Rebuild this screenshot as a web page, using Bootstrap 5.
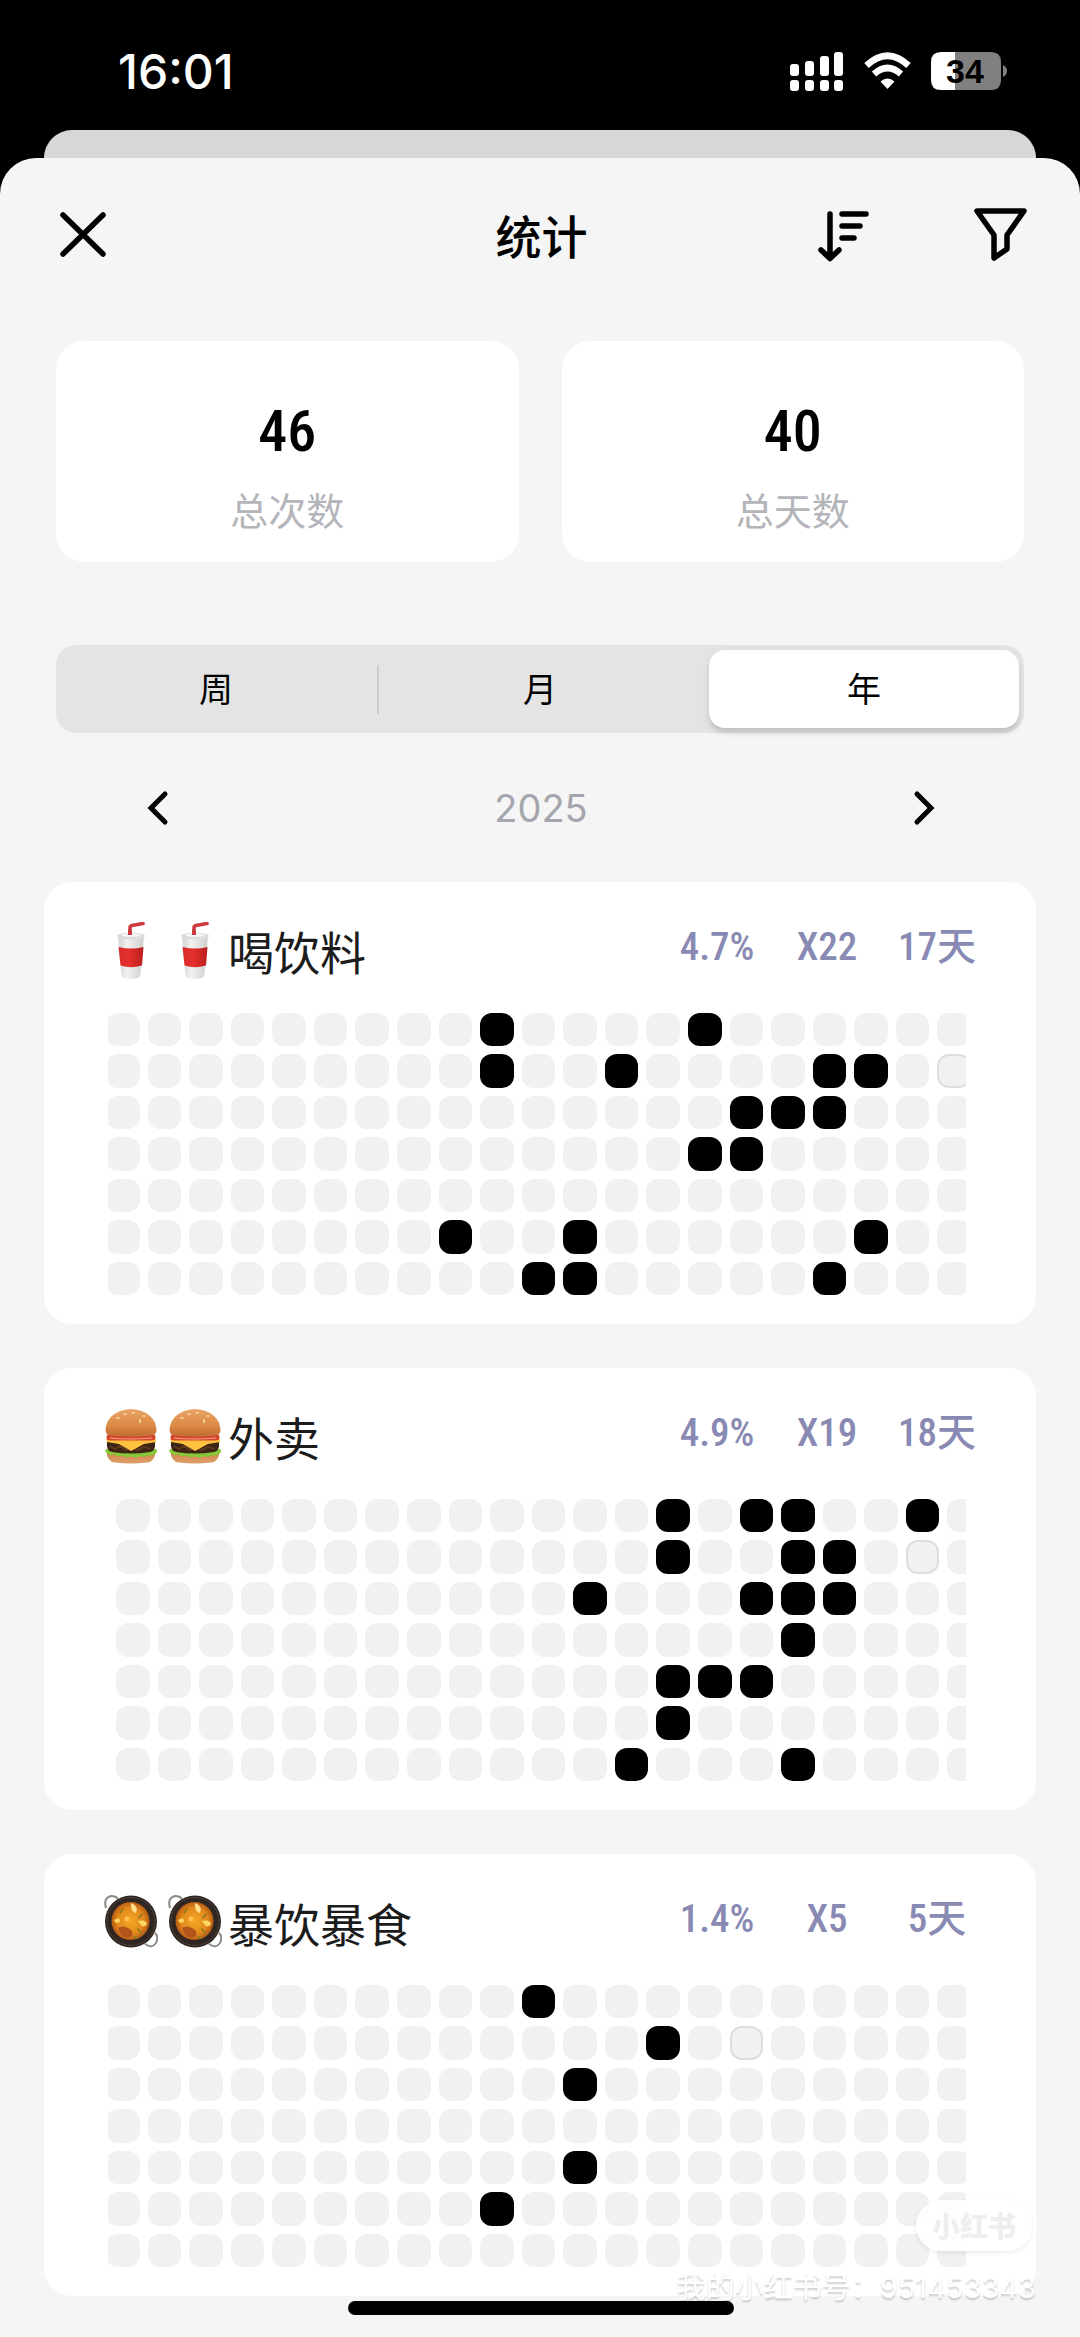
<!DOCTYPE html>
<html lang="zh-CN">
<head>
<meta charset="utf-8">
<meta name="viewport" content="width=device-width, initial-scale=1">
<title>统计</title>
<link href="https://cdn.jsdelivr.net/npm/bootstrap@5.3.0/dist/css/bootstrap.min.css" rel="stylesheet">
<style>
  body { background: #000; color: #000; font-family: Inter, "Noto Sans CJK SC", sans-serif; }
  .status-bar { height: 130px; padding: 33px 70px 0 118px; }
  .status-time { font-size: 48px; line-height: 78px; font-weight: 500; }
  .battery-level { font-weight: 700; font-size: 34px; font-family: "Liberation Sans", sans-serif; }
  .sheet-behind { height: 28px; margin: 0 44px; background: #d7d7d7; border-radius: 28px 28px 0 0; }
  .sheet { background: #f5f5f5; border-radius: 36px 36px 0 0; padding: 0 44px 41px; }
  .sheet-head { height: 183px; display: grid; grid-template-columns: 1fr auto 1fr; padding: 48px 5px 0 8px; align-items: start; }
  .sheet-title { font-size: 46px; line-height: 62px; font-weight: 500; margin: 0; }
  .icon-btn { background: none; border: 0; padding: 0; line-height: 0; color: #000; }
  .stroke-icon { fill: none; stroke: currentColor; stroke-linecap: round; stroke-linejoin: round; }
  .chevron { stroke-linejoin: miter; }
  .head-tools { gap: 98px; }
  .inset { padding: 0 12px; }
  .totals { gap: 43px; }
  .total-box { background: #fff; border-radius: 28px; height: 221px; padding-top: 54px; }
  .total-num { font: 500 58px/72px "Roboto Condensed", Roboto, sans-serif; }
  .total-label { font-size: 38px; line-height: 56px; margin-top: 16px; color: #b4b5ba; font-weight: 400; }
  .segments { margin-top: 83px; height: 88px; background: #e4e4e4; border-radius: 20px; padding: 5px; gap: 6px; }
  .segments label { flex: 1 1 0; font-size: 34px; line-height: 80px; height: 78px; font-weight: 400; border-radius: 16px; text-align: center; margin: 0; }
  .segments .btn-check:checked + label { background: #fff; box-shadow: 0 5px 4px rgba(0,0,0,.1), 0 4px 12px rgba(0,0,0,.05); }
  .seg-line { width: 2px; height: 49px; background: #cdcdcd; }
  .year-row { height: 149px; padding: 0 90px 0 92px; }
  .year-text { font-size: 38px; line-height: 48px; color: #a4a5ad; }
  .habit { background: #fff; border-radius: 28px; height: 442px; padding: 29px 44px 29px 60px; }
  .habit + .habit { margin-top: 44px; }
  .habit-top { height: 102px; }
  .habit-name { font-size: 46px; line-height: 84px; font-weight: 400; color: #1c1c1c; margin: 0 0 0 6px; }
  .emoji-pair { gap: 10px; padding-top: 11px; }
  .emoji-pair svg { width: 54px; height: 58px; }
  .habit-nums { font: 500 39px/72px "Roboto Condensed", Roboto, "Noto Sans CJK SC", sans-serif; color: #898ab3; }
  .habit-nums span { width: 110px; text-align: center; white-space: nowrap; }
  .heat { overflow: hidden; margin: 0 26px 0 4px; }
  .heat-grid { display: grid; grid-auto-flow: column; grid-template-rows: repeat(7, 1fr); grid-template-columns: repeat(21, 1fr); gap: 8px; height: 282px; width: calc(100% + 7px); margin-left: -2px; }
  .heat-grid.shifted { margin-left: 8px; }
  .heat-grid i { background: #f1f1f1; border-radius: 12px; }
  .heat-grid i.on { background: #000; }
  .heat-grid i.today { border: 2px solid #dedede; }
  .home-bar { position: fixed; left: 50%; bottom: 22px; width: 386px; height: 14px; margin-left: -192px; border-radius: 7px; background: #000; }
  .stamp { position: absolute; right: 44px; bottom: 32px; text-align: right; pointer-events: none; }
  .stamp-pill { display: inline-block; margin-right: 4px; padding: 0 16px; height: 51px; border-radius: 26px; background: rgba(255,255,255,.88); box-shadow: 0 2px 5px rgba(0,0,0,.07); font: 900 28px/50px "Noto Sans CJK SC", sans-serif; color: #eee; }
  .stamp-id { font-size: 29px; line-height: 34px; margin-top: 20px; color: #fff; text-shadow: 0 2px 2px rgba(0,0,0,.2); font-family: Inter, "Noto Sans CJK SC", sans-serif; }
</style>
<script src="https://cdn.jsdelivr.net/npm/bootstrap@5.3.0/dist/js/bootstrap.bundle.min.js"></script>
</head>
<body>
<svg width="0" height="0" class="position-absolute" aria-hidden="true">
  <defs>
    <linearGradient id="cupG"><stop offset="0" stop-color="#d2d2d2"/><stop offset=".35" stop-color="#f2f2f2"/><stop offset="1" stop-color="#cfcfcf"/></linearGradient>
    <linearGradient id="redG"><stop offset="0" stop-color="#d52a2a"/><stop offset=".4" stop-color="#e5302c"/><stop offset="1" stop-color="#b9201f"/></linearGradient>
    <linearGradient id="bunG" x2="0" y2="1"><stop offset="0" stop-color="#e9a465"/><stop offset=".6" stop-color="#dc8a47"/><stop offset="1" stop-color="#bf6a31"/></linearGradient>
    <linearGradient id="bunB" x2="0" y2="1"><stop offset="0" stop-color="#cf8147"/><stop offset="1" stop-color="#dfa06a"/></linearGradient>
    <radialGradient id="soupG"><stop offset="0" stop-color="#f5a623"/><stop offset=".7" stop-color="#e08a1c"/><stop offset="1" stop-color="#b85c14"/></radialGradient>
    <symbol id="cup" viewBox="0 0 54 58">
      <path d="M26 14V6q0-2 2-2.400L39 1.500" fill="none" stroke="#cf3a40" stroke-width="3.600" stroke-linecap="round"/>
      <path d="M14 14L17.500 53Q18 57 27 57T36.500 53L40 14Z" fill="url(#cupG)"/>
      <ellipse cx="27" cy="14" rx="14" ry="3.500" fill="#dcdcdc"/>
      <path d="M17 12.500Q27 9.500 37 12.500L36 14Q27 16 18 14Z" fill="#f6f6f6"/>
      <path d="M24 13h4v-5h-4Z" fill="#cf3a40"/>
      <path d="M14.500 25Q27 28 39.500 25L38 43.500Q27 47 16.500 43.500Z" fill="url(#redG)"/>
    </symbol>
    <symbol id="burger" viewBox="0 0 54 58">
      <path d="M2.500 43Q3 54 11 54.500Q27 56.500 43 54.500Q51 54 51.500 43Z" fill="url(#bunB)"/>
      <path d="M2 41q-2 4 2 4 2 4 6 1 4 4 8 1 5 4 9 1 5 3 9 0 5 2 8-1 4 2 6-1 5-1 2-5Z" fill="#84c93a"/>
      <path d="M3 34q-1 9 5 10 19 3 38 0 6-1 5-10Z" fill="#3c2415"/>
      <path d="M6 38l5 3 5-3 6 4 5-2 7 2 6-3 7 2" stroke="#5e3a20" stroke-width="2" fill="none"/>
      <path d="M2 31h50v3L40 36 27 43 15 36 3 34Z" fill="#ffc23d"/>
      <path d="M3 27h48q2 5-3 5.500H6Q1 32 3 27Z" fill="#d6452b"/>
      <path d="M6 30q20 2 42 0" stroke="#f5a08a" stroke-width="1.200" fill="none"/>
      <path d="M1.500 22Q3 3 27 1Q51 3 52.500 22Q52.500 27 47 27.500Q27 30 7 27.500Q1.500 27 1.500 22Z" fill="url(#bunG)"/>
      <g fill="#f7cf9a"><ellipse cx="21" cy="6" rx="2" ry="1"/><ellipse cx="29" cy="5" rx="2" ry="1"/><ellipse cx="36" cy="13" rx="1.200" ry="2"/><ellipse cx="14" cy="10" rx="2" ry="1"/><ellipse cx="40" cy="8" rx="1.600" ry="1"/></g>
    </symbol>
    <symbol id="pan" viewBox="0 0 54 58">
      <g fill="none" stroke="#8d8a87" stroke-width="2"><path d="M2 14Q-1 4 7 2Q12 2 14 5"/><path d="M41 50Q48 55 52 49Q55 43 51 39"/></g>
      <circle cx="27" cy="27.500" r="26" fill="#2f2622"/>
      <circle cx="27" cy="27.500" r="24" fill="none" stroke="#4a3f39" stroke-width="1"/>
      <circle cx="26.500" cy="27" r="19" fill="url(#soupG)"/>
      <path d="M27 9q8 3 5 10-6-1-5-10Z" fill="#ffe08a"/>
      <path d="M14 34q6-4 13 2 4 6-3 8-8-1-10-10Z" fill="#b4531a"/>
      <path d="M34 27q8-2 9 3-4 6-9-3ZM10 26l5-2 1 4-4 1Z" fill="#ffd766"/>
      <g stroke="#8a7a20" stroke-width="1.500" stroke-linecap="round"><path d="M19 15l-3 4M38 20l-3 4M34 35l3 4M30 43l4 1"/></g>
      <circle cx="23" cy="25" r="2.500" fill="#ffbf4a"/>
    </symbol>
  </defs>
</svg>

<div class="status-bar d-flex justify-content-between align-items-start text-white">
  <span class="status-time">16:01</span>
  <svg width="220" height="44" viewBox="0 0 220 44" class="mt-3" role="img" aria-label="信号 无线网络 电量 34">
    <g fill="#fff">
      <rect x="0" y="15" width="9" height="12" rx="3"/><rect x="15" y="12" width="9" height="15" rx="3"/><rect x="30" y="7" width="9" height="20" rx="3"/><rect x="44" y="3" width="9" height="24" rx="3"/>
      <rect x="0" y="31" width="9" height="11" rx="3"/><rect x="15" y="31" width="9" height="11" rx="3"/><rect x="30" y="31" width="9" height="11" rx="3"/><rect x="44" y="31" width="9" height="11" rx="3"/>
      <path d="M97.500 40L90.500 32.500Q97.500 26.500 104.500 32.500Z"/>
    </g>
    <g fill="none" stroke="#fff" stroke-width="6.500"><path d="M84 25Q97.500 13 111 25"/><path d="M76.500 16.500Q97.500-3 118.500 16.500"/></g>
    <path d="M151 3h14v38h-14q-10 0-10-10V13q0-10 10-10Z" fill="#fff"/>
    <path d="M165 3h36q10 0 10 10v18q0 10-10 10h-36ZM213 16q4 2 4 6t-4 6Z" fill="#808080"/>
    <text x="175" y="34" text-anchor="middle" class="battery-level">34</text>
  </svg>
</div>
<div class="sheet-behind"></div>

<main class="sheet">
  <header class="sheet-head">
    <div><button class="icon-btn" type="button" aria-label="关闭"><svg class="stroke-icon" width="62" height="58" viewBox="0 0 62 58" stroke-width="5.500"><path d="M11 9L51 48M51 9L11 48"/></svg></button></div>
    <h1 class="sheet-title">统计</h1>
    <div class="head-tools d-flex justify-content-end">
      <button class="icon-btn" type="button" aria-label="排序"><svg class="stroke-icon" width="60" height="58" viewBox="0 0 60 58" stroke-width="5.500"><path d="M17 8V52M8 44L17 52.500L26 44M29 8H53M29 20H47M29 32H41"/></svg></button>
      <button class="icon-btn" type="button" aria-label="筛选"><svg class="stroke-icon" width="60" height="58" viewBox="0 0 60 58" stroke-width="5.500"><path d="M6 5H53L36 29V43L23 52V29Z"/></svg></button>
    </div>
  </header>

  <div class="inset">
    <section class="totals d-flex text-center">
      <div class="total-box flex-fill"><div class="total-num">46</div><div class="total-label">总次数</div></div>
      <div class="total-box flex-fill"><div class="total-num">40</div><div class="total-label">总天数</div></div>
    </section>
    <div class="segments d-flex align-items-center" role="group" aria-label="统计范围">
      <input class="btn-check" type="radio" name="range" id="rangeWeek"><label for="rangeWeek">周</label>
      <span class="seg-line"></span>
      <input class="btn-check" type="radio" name="range" id="rangeMonth"><label for="rangeMonth">月</label>
      <span class="seg-line invisible"></span>
      <input class="btn-check" type="radio" name="range" id="rangeYear" checked><label for="rangeYear">年</label>
    </div>
  </div>
  <div class="year-row d-flex justify-content-between align-items-center">
    <button class="icon-btn" type="button" aria-label="上一年"><svg class="stroke-icon chevron" width="44" height="44" viewBox="0 0 44 44" stroke-width="5"><path d="M29 8L15 22L29 36"/></svg></button>
    <span class="year-text">2025</span>
    <button class="icon-btn" type="button" aria-label="下一年"><svg class="stroke-icon chevron" width="44" height="44" viewBox="0 0 44 44" stroke-width="5"><path d="M15 8L29 22L15 36"/></svg></button>
  </div>

  <section class="habit">
    <div class="habit-top d-flex align-items-start">
      <div class="emoji-pair d-flex" aria-hidden="true"><svg><use href="#cup"/></svg><svg><use href="#cup"/></svg></div>
      <h2 class="habit-name">喝饮料</h2>
      <div class="habit-nums d-flex ms-auto"><span>4.7%</span><span>X22</span><span>17天</span></div>
    </div>
    <div class="heat"><div class="heat-grid" data-today="20,1" data-on="9,0 14,0 9,1 12,1 17,1 18,1 15,2 16,2 17,2 14,3 15,3 8,5 11,5 18,5 10,6 11,6 17,6"></div></div>
  </section>
  <section class="habit">
    <div class="habit-top d-flex align-items-start">
      <div class="emoji-pair d-flex" aria-hidden="true"><svg><use href="#burger"/></svg><svg><use href="#burger"/></svg></div>
      <h2 class="habit-name">外卖</h2>
      <div class="habit-nums d-flex ms-auto"><span>4.9%</span><span>X19</span><span>18天</span></div>
    </div>
    <div class="heat"><div class="heat-grid shifted" data-today="19,1" data-on="13,0 15,0 16,0 19,0 13,1 16,1 17,1 11,2 15,2 16,2 17,2 16,3 13,4 14,4 15,4 13,5 12,6 16,6"></div></div>
  </section>
  <section class="habit">
    <div class="habit-top d-flex align-items-start">
      <div class="emoji-pair d-flex" aria-hidden="true"><svg><use href="#pan"/></svg><svg><use href="#pan"/></svg></div>
      <h2 class="habit-name">暴饮暴食</h2>
      <div class="habit-nums d-flex ms-auto"><span>1.4%</span><span>X5</span><span>5天</span></div>
    </div>
    <div class="heat"><div class="heat-grid" data-today="15,1" data-on="10,0 13,1 11,2 11,4 9,5"></div></div>
  </section>
</main>
<div class="stamp"><span class="stamp-pill">小红书</span><div class="stamp-id">我的小红书号：951453343</div></div>
<div class="home-bar"></div>

<script>
  // One cell per day: 21 week columns of 7 days each.
  document.querySelectorAll('.heat-grid').forEach(grid => {
    const on = new Set(grid.dataset.on.split(' '));
    for (let week = 0; week < 21; week++) {
      for (let day = 0; day < 7; day++) {
        const cell = document.createElement('i');
        const key = week + ',' + day;
        if (on.has(key)) cell.className = 'on';
        if (key === grid.dataset.today) cell.className = 'today';
        grid.append(cell);
      }
    }
  });
</script>
</body>
</html>
